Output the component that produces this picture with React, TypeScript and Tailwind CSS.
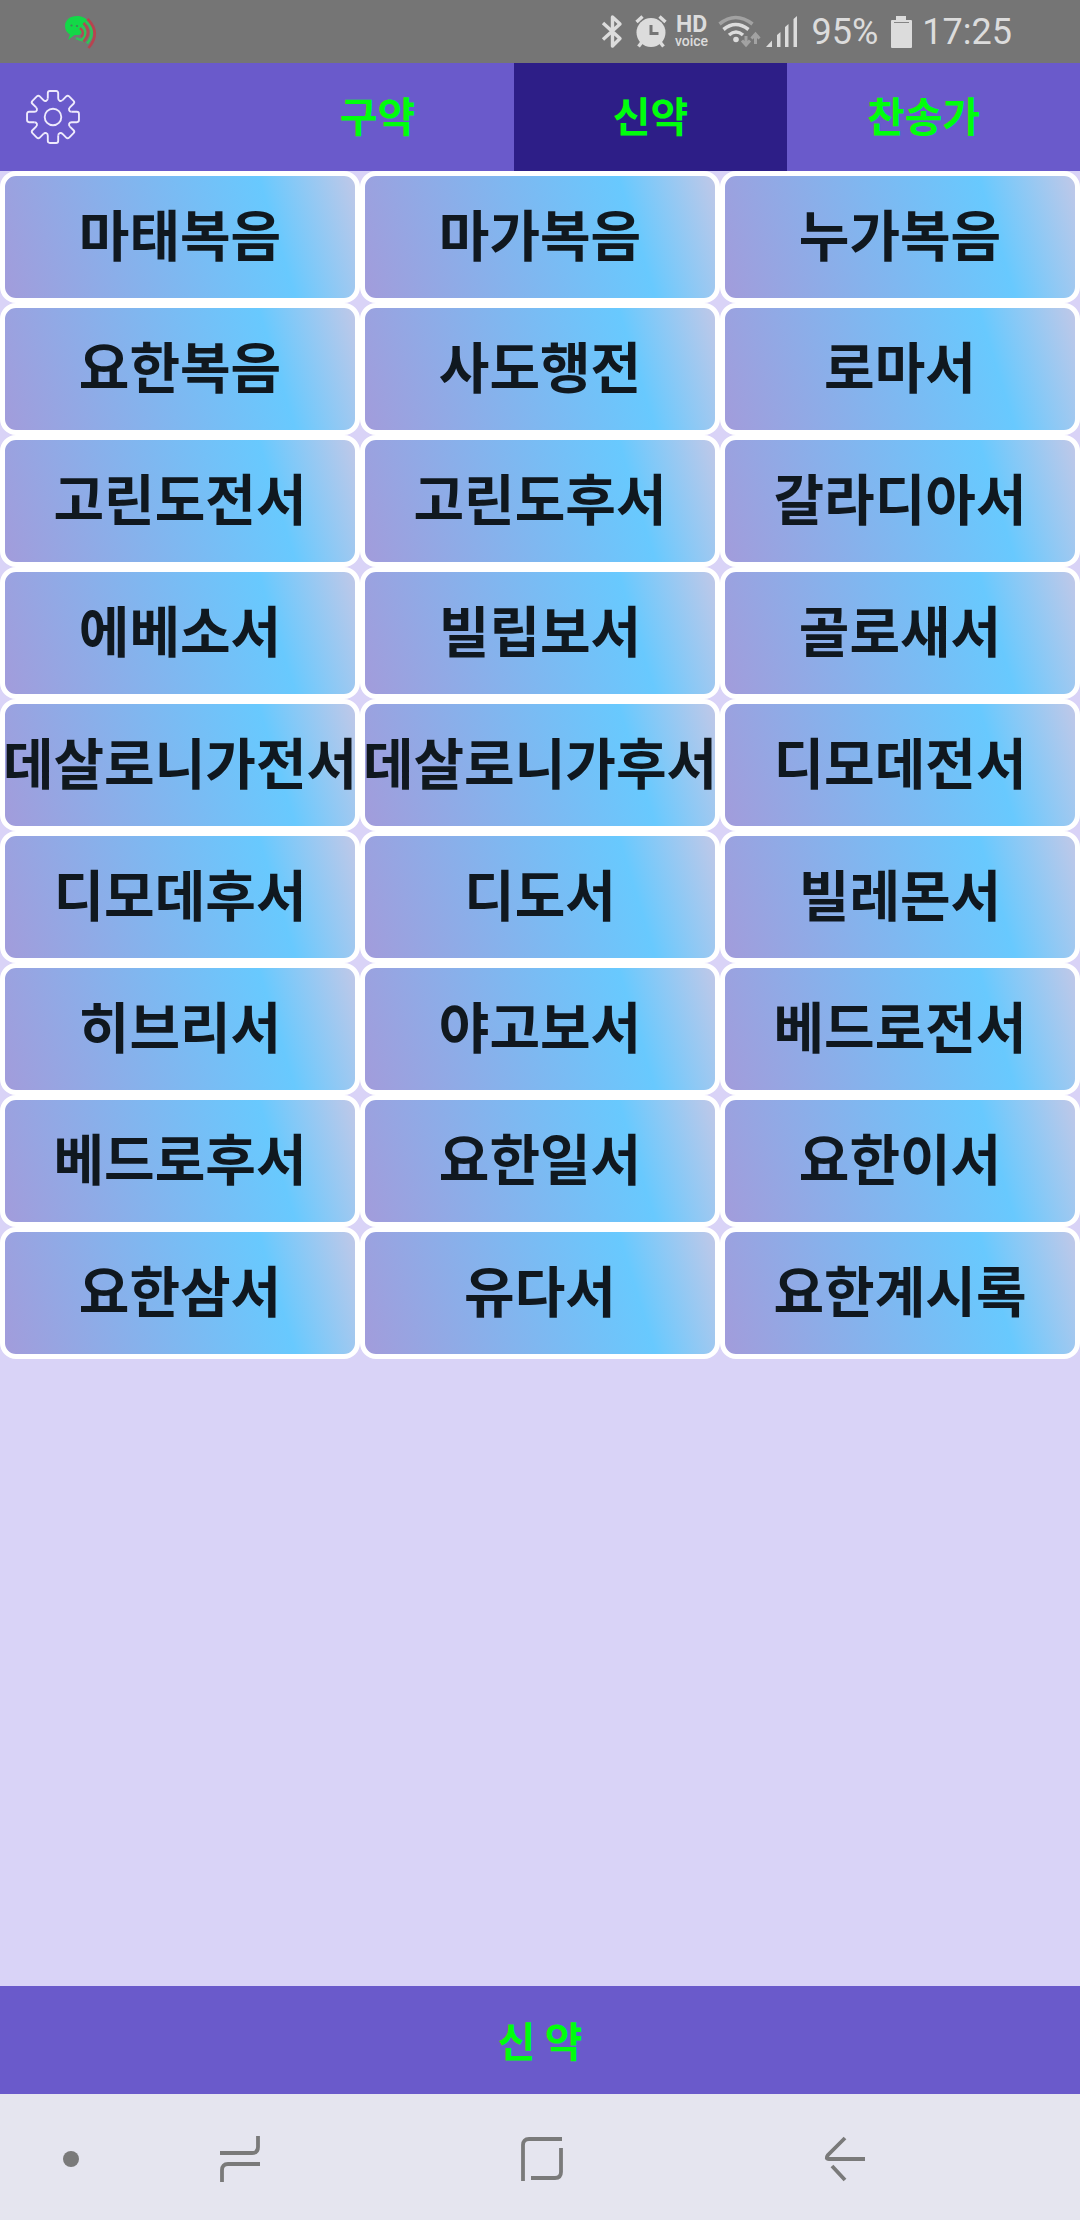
import type { ReactNode } from "react";

const books = [
  "마태복음", "마가복음", "누가복음",
  "요한복음", "사도행전", "로마서",
  "고린도전서", "고린도후서", "갈라디아서",
  "에베소서", "빌립보서", "골로새서",
  "데살로니가전서", "데살로니가후서", "디모데전서",
  "디모데후서", "디도서", "빌레몬서",
  "히브리서", "야고보서", "베드로전서",
  "베드로후서", "요한일서", "요한이서",
  "요한삼서", "유다서", "요한계시록",
];

const tabs = [
  { label: "구약", active: false },
  { label: "신약", active: true },
  { label: "찬송가", active: false },
];

const gearAngles = [0, 45, 90, 135, 180, 225, 270, 315];

function VoiceAppIcon() {
  return (
    <svg viewBox="64 13 36 36" className="size-9" aria-hidden="true">
      <path d="M77 15c-7 0-12 4-12 10 0 4 2 7 5 8.500l-2 5.500 6.500-5h5l9-12c-2-5-6-7-11.500-7z" fill="#13d847" />
      <circle cx="71.500" cy="24.500" r="1.100" fill="#4a7a5a" />
      <circle cx="77" cy="25" r="1.100" fill="#4a7a5a" />
      <g fill="none" strokeWidth="2.600">
        <path d="M76 37q5 3 9 2" stroke="#2fc25a" />
        <path d="M80 27q6 5 1 9" stroke="#b04a54" />
        <path d="M82 25q7 7 0 14" stroke="#2fc25a" />
        <path d="M83.500 22q9 9 0 18.500" stroke="#b04a54" />
        <path d="M86 20q11 11 1 22.500" stroke="#2fc25a" />
        <path d="M87.500 18q14 14 1 29" stroke="#b8434f" />
      </g>
    </svg>
  );
}

function StatusBar() {
  return (
    <header className="flex h-[63px] items-center justify-between bg-[#757575] pl-16 pr-[68px] text-[#dcdcdc]">
      <VoiceAppIcon />
      <div className="flex items-center">
        <svg viewBox="601 14 22 36" className="mr-3 h-9 w-[22px]" fill="none" stroke="currentColor" strokeWidth="3.400" strokeLinejoin="round" aria-label="Bluetooth">
          <path d="M603 23l17 15.500-7.500 7.500V17l7.500 7-17 15.500" />
        </svg>
        <svg viewBox="635 14 32 36" className="mr-2 h-9 w-8" fill="none" stroke="currentColor" aria-label="Alarm">
          <circle cx="651" cy="32.500" r="14.500" fill="currentColor" stroke="none" />
          <path d="M636.500 22l6-5.500M665.500 22l-6-5.500M642 42l-3.500 4.500M660 42l3.500 4.500" strokeWidth="3.400" />
          <path d="M651 25v8.500h7.500" stroke="#757575" strokeWidth="3" />
        </svg>
        <div className="mr-2 flex w-[34px] flex-col items-center font-['Roboto',sans-serif]">
          <span className="text-[23px] leading-[18px] font-bold">HD</span>
          <span className="text-sm leading-[14px] font-medium">voice</span>
        </div>
        <svg viewBox="717 14 44 36" className="mr-1 h-9 w-11" fill="none" stroke="currentColor" strokeWidth="3.600" aria-label="Wi-Fi">
          <path d="M719.500 24q16-13 33 0" stroke="#a2a2a2" />
          <path d="M723.500 29.500q12-10 25 0M729 35q7-6 14 0" />
          <circle cx="736" cy="39.500" r="2.800" fill="currentColor" stroke="none" />
          <path d="M746 36v9M742 40.500l4 4.500 4-4.500M755.500 44v-9M751.500 38.500l4-4.500 4 4.500" stroke="#a2a2a2" strokeWidth="3" />
        </svg>
        <svg viewBox="765 14 33 36" className="mr-3.5 h-9 w-[33px]" fill="currentColor" aria-label="Signal">
          <path d="M766 47l6-6.500V47zM777 47V35l3.500-3V47zM785 47V27l3.500-3V47zM793.500 47V19l3.500-3V47z" />
        </svg>
        <span className="mr-3 font-['Roboto',sans-serif] text-4xl leading-9">95%</span>
        <svg viewBox="889 14 24 36" className="mr-2 h-9 w-6" fill="currentColor" aria-label="Battery">
          <path d="M895 16h10v4h5a1 1 0 0 1 1 1v26a1 1 0 0 1-1 1h-19a1 1 0 0 1-1-1V21a1 1 0 0 1 1-1h4z" />
          <path d="M893 22.500h15" stroke="#858585" strokeWidth="1" />
        </svg>
        <time className="font-['Roboto',sans-serif] text-4xl leading-9">17:25</time>
      </div>
    </header>
  );
}

function GearIcon() {
  return (
    <svg viewBox="-26 -26 52 52" className="size-[54px]" fill="none" stroke="#eeeafc" strokeWidth="1.800" aria-hidden="true">
      <circle r="8" />
      {gearAngles.map((angle) => (
        <path
          key={angle}
          transform={`rotate(${angle})`}
          d="M-5-18V-23q0-2 2-2H3q2 0 2 2V-18C5-15.500 7.400-14.600 9.190-16.260"
        />
      ))}
    </svg>
  );
}

function NavButton({ label, children }: { label: string; children: ReactNode }) {
  return (
    <button aria-label={label} className="flex items-center justify-center">
      <svg viewBox="0 0 48 52" className="h-[52px] w-12" fill="none" stroke="#7a7a7a" strokeWidth="3.800">
        {children}
      </svg>
    </button>
  );
}

export default function App() {
  return (
    <div className="flex min-h-screen flex-col bg-[#d9d3f7] font-['Noto_Sans_CJK_KR',sans-serif]">
      <StatusBar />
      <nav className="flex h-[108px] items-stretch bg-[#6a5acb] pr-5">
        <div className="flex flex-1 items-center pl-[26px]">
          <button aria-label="설정">
            <GearIcon />
          </button>
        </div>
        {tabs.map((tab) => (
          <button
            key={tab.label}
            aria-pressed={tab.active}
            className={
              tab.active
                ? "w-[273px] bg-[#2d1e87] pb-1 text-[41px] font-bold text-[#00ff0c]"
                : "w-[273px] pb-1 text-[41px] font-bold text-[#00ff0c]"
            }
          >
            {tab.label}
          </button>
        ))}
      </nav>
      <main className="grid flex-1 grid-cols-3 content-start">
        {books.map((book) => (
          <button
            key={book}
            className="flex h-[132px] items-center justify-center overflow-hidden rounded-2xl border-5 border-white bg-[linear-gradient(73deg,#a29cdb_0%,#68c9fe_75%,#c0c8e8_100%)] bg-origin-padding pb-2.5 text-[55px] leading-none font-bold whitespace-nowrap text-[#10181f]"
          >
            {book}
          </button>
        ))}
      </main>
      <h1 className="flex h-[108px] items-center justify-center bg-[#6a5acb] text-[41px] font-bold text-[#00ff0c]">신 약</h1>
      <footer className="flex h-[126px] items-stretch bg-[#e5e5ef] pr-[84px] pl-[47px]">
        <NavButton label="고정">
          <circle cx="24" cy="28" r="8" fill="#7a7a7a" stroke="none" />
        </NavButton>
        <div className="-ml-1.5 grid flex-1 grid-cols-3">
          <NavButton label="최근 앱">
            <path d="M4 22H36Q42 22 42 16V5M44 33H12Q6 33 6 39V51" />
          </NavButton>
          <NavButton label="홈">
            <path d="M5 50V14Q5 8 11 8H44M43 17V41Q43 47 37 47H13" />
          </NavButton>
          <NavButton label="뒤로">
            <path d="M24 7L7 24Q4 28 8 28H44M11 35L24 49" />
          </NavButton>
        </div>
      </footer>
    </div>
  );
}
